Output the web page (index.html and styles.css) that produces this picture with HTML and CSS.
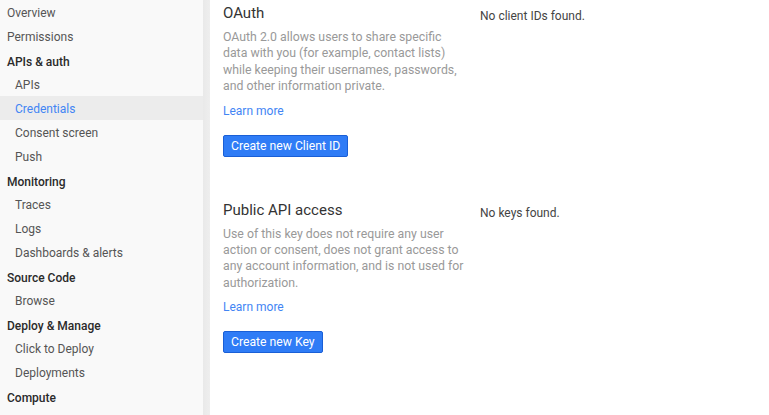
FILE: index.html
```html
<!DOCTYPE html>
<html lang="en">
<head>
    <meta charset="UTF-8">
    <title>Credentials</title>
    <link rel="stylesheet" href="styles.css">
</head>
<body>
    <div class="page">
        <div class="sidebar">
            <div class="nav-item top">Overview</div>
            <div class="nav-item top">Permissions</div>
            <div class="nav-header">APIs &amp; auth</div>
            <div class="nav-item">APIs</div>
            <div class="nav-item active">Credentials</div>
            <div class="nav-item">Consent screen</div>
            <div class="nav-item">Push</div>
            <div class="nav-header">Monitoring</div>
            <div class="nav-item">Traces</div>
            <div class="nav-item">Logs</div>
            <div class="nav-item">Dashboards &amp; alerts</div>
            <div class="nav-header">Source Code</div>
            <div class="nav-item">Browse</div>
            <div class="nav-header">Deploy &amp; Manage</div>
            <div class="nav-item">Click to Deploy</div>
            <div class="nav-item">Deployments</div>
            <div class="nav-header">Compute</div>
        </div>
        <div class="divider"></div>
        <div class="content">
            <div class="section">
                <div class="section-info">
                    <h2 class="section-title">OAuth</h2>
                    <p class="section-desc">OAuth 2.0 allows users to share specific data with you (for example, contact lists) while keeping their usernames, passwords, and other information private.</p>
                    <a class="learn-more" href="#">Learn more</a>
                    <button class="create-btn">Create new Client ID</button>
                </div>
                <div class="section-list">No client IDs found.</div>
            </div>
            <div class="section">
                <div class="section-info">
                    <h2 class="section-title">Public API access</h2>
                    <p class="section-desc">Use of this key does not require any user action or consent, does not grant access to any account information, and is not used for authorization.</p>
                    <a class="learn-more" href="#">Learn more</a>
                    <button class="create-btn">Create new Key</button>
                </div>
                <div class="section-list">No keys found.</div>
            </div>
        </div>
    </div>
</body>
</html>
```

FILE: styles.css
```css
body {
    margin: 0;
    background-color: #fff;
    font-family: Roboto, "Liberation Sans", Arial, sans-serif;
    font-size: 12px;
    overflow: hidden;
}
.page {
    display: flex;
    height: 415px;
}
.sidebar {
    width: 203px;
    flex-shrink: 0;
    background-color: #f9f9f9;
}
.divider {
    width: 7px;
    flex-shrink: 0;
    background: linear-gradient(to right, #e9e9e9, #eeeeee);
}
.nav-item {
    height: 24px;
    line-height: 26px;
    padding-left: 15px;
    color: #555;
    white-space: nowrap;
    overflow: hidden;
}
.nav-item.top {
    padding-left: 7px;
}
.nav-item.active {
    background-color: #ececec;
    color: #4285f4;
}
.nav-header {
    height: 24px;
    box-sizing: border-box;
    padding-top: 5px;
    padding-left: 7px;
    line-height: 19px;
    color: #2a2a2a;
    font-weight: 500;
}
.content {
    flex: 1;
    padding-left: 13px;
}
.section {
    display: flex;
    margin-bottom: 40px;
}
.section-info {
    width: 243px;
    flex-shrink: 0;
}
.section-title {
    margin: 3px 0 6px;
    font-size: 15px;
    font-weight: 400;
    line-height: 20px;
    color: #333;
}
.section-desc {
    margin: 0;
    font-size: 12.3px;
    color: #999;
    line-height: 16.4px;
}
.learn-more {
    display: block;
    margin-top: 8px;
    line-height: 16px;
    color: #4285f4;
    text-decoration: none;
}
.create-btn {
    display: block;
    margin-top: 16px;
    height: 22px;
    padding: 0 7px;
    background-color: #2f7cf6;
    border: 1px solid #1a5fd6;
    border-radius: 2px;
    color: #fff;
    font-family: inherit;
    font-size: 12.2px;
}
.section-list {
    margin-left: 14px;
    padding-top: 8px;
    line-height: 16px;
    color: #444;
}
```
